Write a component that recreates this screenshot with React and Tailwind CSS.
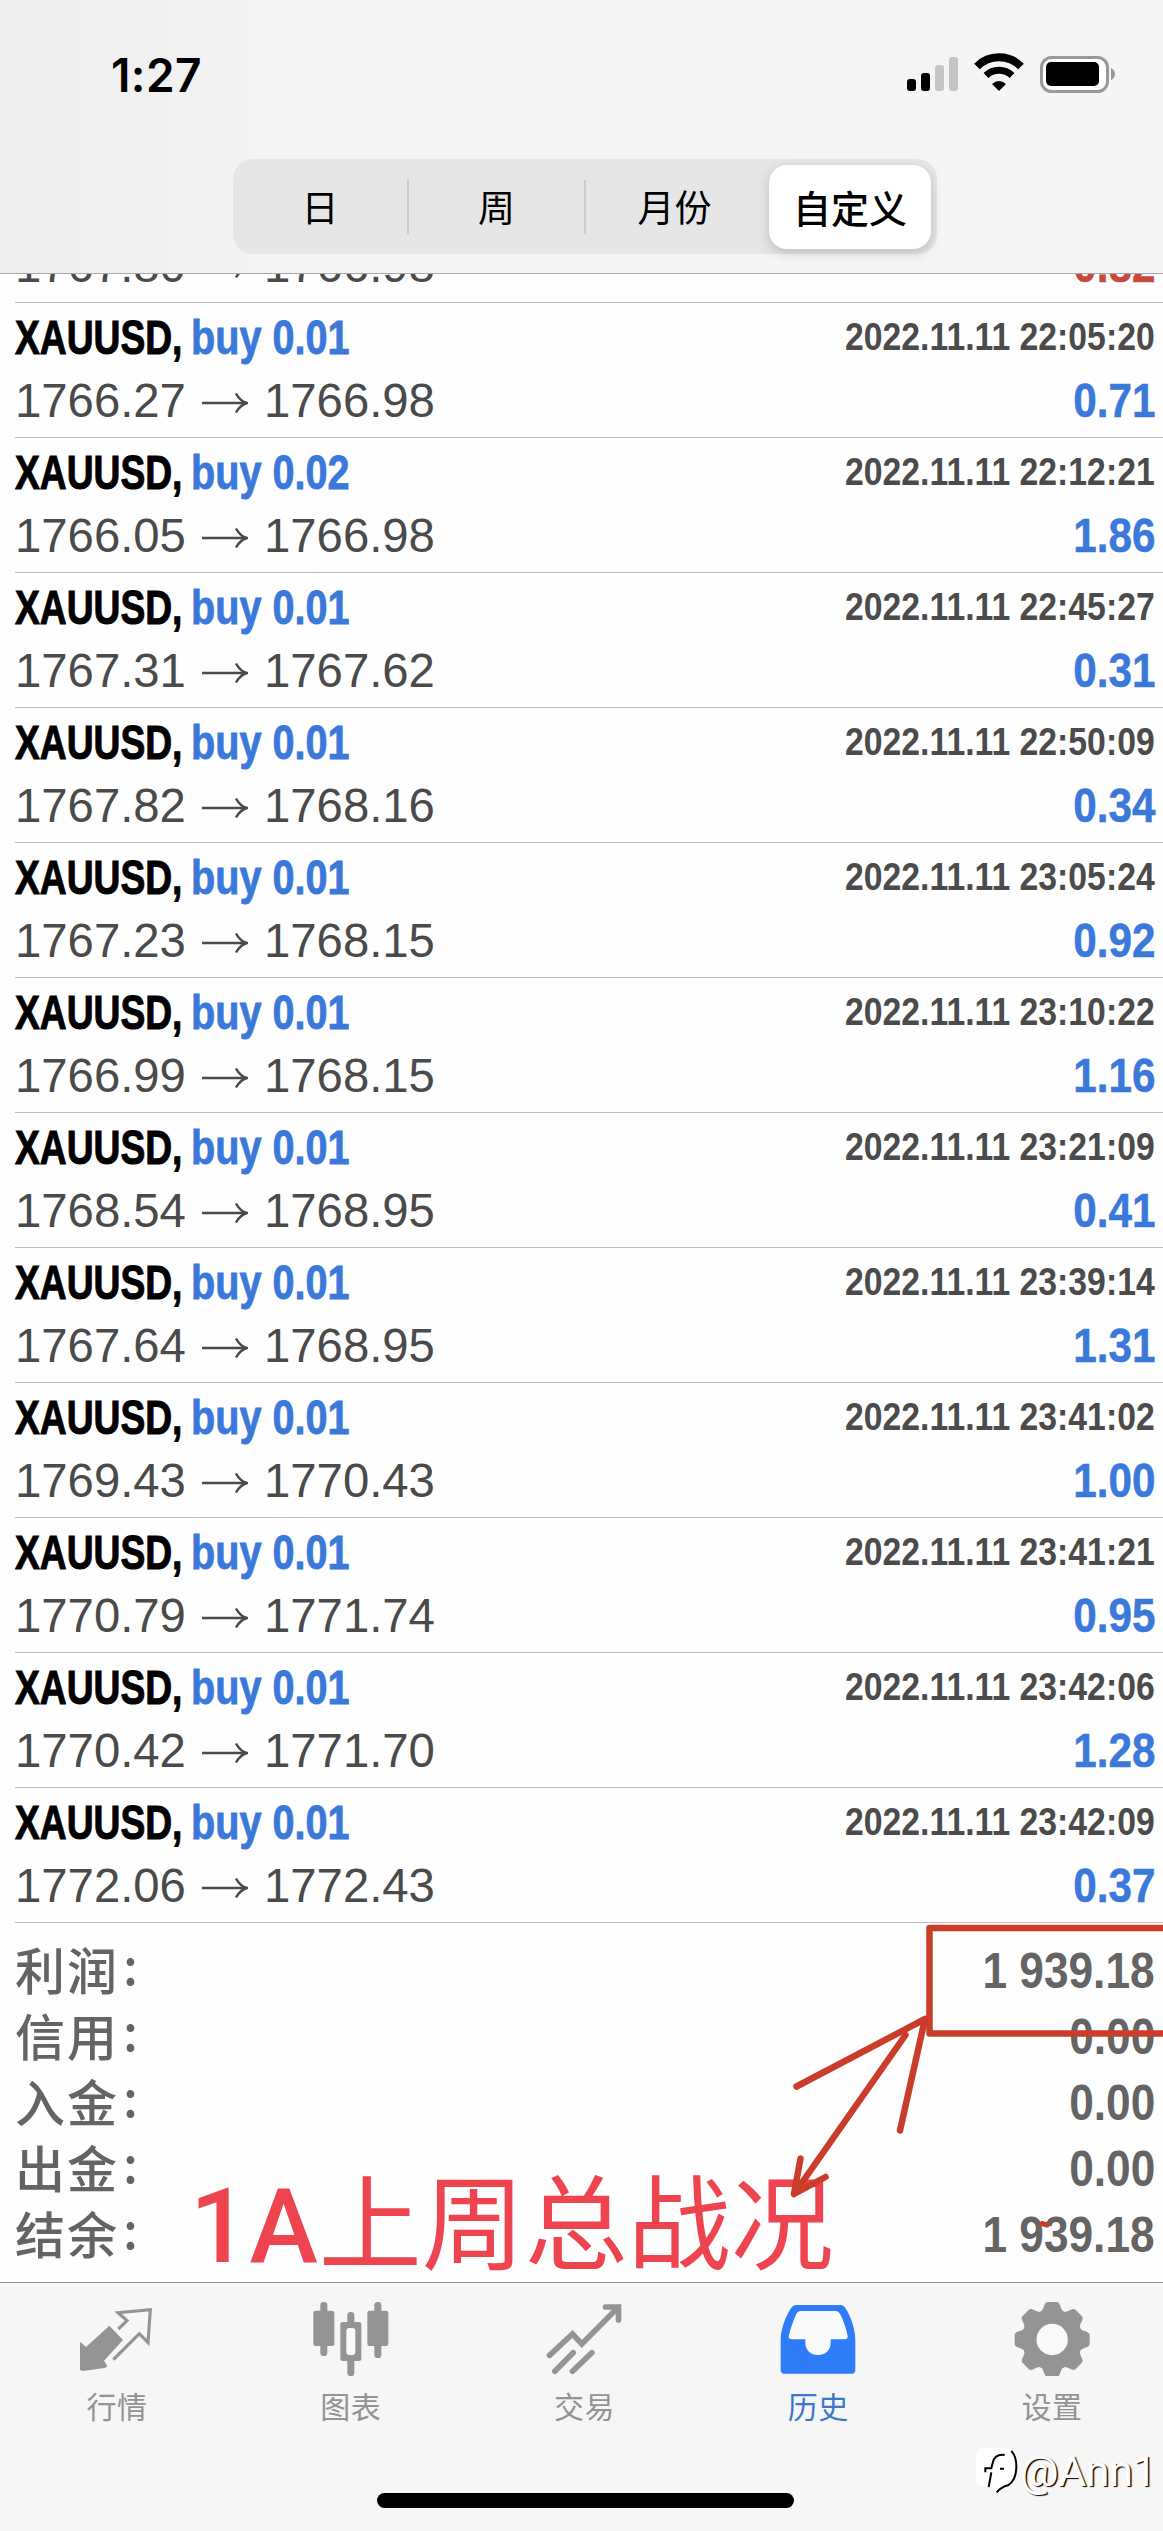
import React from "react";

const deals = [
  { lot: "0.01", open: "1767.80", close: "1766.98", time: "2022.11.11 22:03:41", profit: "-0.82" },
  { lot: "0.01", open: "1766.27", close: "1766.98", time: "2022.11.11 22:05:20", profit: "0.71" },
  { lot: "0.02", open: "1766.05", close: "1766.98", time: "2022.11.11 22:12:21", profit: "1.86" },
  { lot: "0.01", open: "1767.31", close: "1767.62", time: "2022.11.11 22:45:27", profit: "0.31" },
  { lot: "0.01", open: "1767.82", close: "1768.16", time: "2022.11.11 22:50:09", profit: "0.34" },
  { lot: "0.01", open: "1767.23", close: "1768.15", time: "2022.11.11 23:05:24", profit: "0.92" },
  { lot: "0.01", open: "1766.99", close: "1768.15", time: "2022.11.11 23:10:22", profit: "1.16" },
  { lot: "0.01", open: "1768.54", close: "1768.95", time: "2022.11.11 23:21:09", profit: "0.41" },
  { lot: "0.01", open: "1767.64", close: "1768.95", time: "2022.11.11 23:39:14", profit: "1.31" },
  { lot: "0.01", open: "1769.43", close: "1770.43", time: "2022.11.11 23:41:02", profit: "1.00" },
  { lot: "0.01", open: "1770.79", close: "1771.74", time: "2022.11.11 23:41:21", profit: "0.95" },
  { lot: "0.01", open: "1770.42", close: "1771.70", time: "2022.11.11 23:42:06", profit: "1.28" },
  { lot: "0.01", open: "1772.06", close: "1772.43", time: "2022.11.11 23:42:09", profit: "0.37" },
];

const totals = [
  { label: "利润", value: "1 939.18" },
  { label: "信用", value: "0.00" },
  { label: "入金", value: "0.00" },
  { label: "出金", value: "0.00" },
  { label: "结余", value: "1 939.18" },
];

function StatusBar() {
  return (
    <div className="flex h-[159px] items-start justify-between pt-[51px] pr-[48px] pl-[111px]">
      <span className="font-['Inter',sans-serif] text-[46px] leading-[48px] font-semibold tracking-[0.4px]">
        1:27
      </span>
      <svg className="mt-[2px] h-[42px] w-[210px]" viewBox="0 0 210 42" fill="none">
        {/* Signal */}
        <rect x="2" y="26" width="9" height="12" rx="3" fill="#000" />
        <rect x="16" y="20" width="9" height="18" rx="3" fill="#000" />
        <rect x="30" y="12" width="9" height="26" rx="3" fill="#c5c5c5" />
        <rect x="44" y="4" width="9" height="34" rx="3" fill="#c5c5c5" />
        {/* Wifi */}
        <path d="M72 13.500A31 31 0 0 1 116 13.500" stroke="#000" strokeWidth="8" />
        <path d="M81 22.500A19 19 0 0 1 107 22.500" stroke="#000" strokeWidth="7" />
        <path d="M94 38L87 31Q94 25 101 31Z" fill="#000" />
        {/* Battery */}
        <rect x="136.500" y="4.500" width="66" height="34" rx="10" stroke="#999" strokeWidth="3" fill="#fff" />
        <rect x="141" y="9" width="53" height="24" rx="5" fill="#000" />
        <path d="M206 15Q210 17 210 21Q210 25 206 27Z" fill="#999" />
      </svg>
    </div>
  );
}

function PeriodTabs() {
  return (
    <div className="ml-[233px] flex h-[95px] w-[704px] items-center rounded-[20px] bg-[#e6e6e7] pr-[6px] text-[37px]">
      <div className="w-[174px] text-center">日</div>
      <div className="h-[54px] w-[2px] bg-[#cdcdcf]" />
      <div className="w-[175px] text-center">周</div>
      <div className="h-[54px] w-[2px] bg-[#cdcdcf]" />
      <div className="w-[177px] text-center">月份</div>
      <div className="ml-[6px] flex h-[84px] w-[162px] items-center justify-center rounded-[18px] bg-white text-[38px] font-medium shadow-[0_4px_12px_rgba(0,0,0,0.18)]">
        自定义
      </div>
    </div>
  );
}

function DealRow({ deal }) {
  const loss = deal.profit.startsWith("-");

  return (
    <div className="ml-[15px] h-[135px] border-b border-[#bdbdbf] pt-[11px] pr-[8px] font-['Liberation_Sans',sans-serif] text-[48px] leading-[48px]">
      <div className="flex font-bold whitespace-nowrap">
        <span className="w-[176px] origin-left scale-x-[.775] text-black [-webkit-text-stroke:1px]">XAUUSD,</span>
        <span className="w-[200px] origin-left scale-x-[.825] text-[#3a78da] [-webkit-text-stroke:0.8px]">
          buy {deal.lot}
        </span>
        <span className="mt-[4px] ml-auto origin-right scale-x-[.888] text-[38px] leading-[38px] text-[#4b4b4c]">
          {deal.time}
        </span>
      </div>
      <div className="mt-[15px] flex items-center whitespace-nowrap text-[#4a4a4b]">
        <span className="w-[187px] origin-left scale-x-[.985]">{deal.open}</span>
        <svg className="mt-[4px] h-[22px] w-[46px]" viewBox="0 0 46 22" fill="none" stroke="#4a4a4b" strokeWidth="2.500">
          <path d="M0 11H44M34 1.500Q38 9 45 11Q38 13 34 20.500" />
        </svg>
        <span className="ml-[16px] origin-left scale-x-[.985]">{deal.close}</span>
        <span
          className={`ml-auto origin-right scale-x-[.88] font-bold [-webkit-text-stroke:0.5px] ${loss ? "text-[#c8493c]" : "text-[#3a78da]"}`}
        >
          {deal.profit}
        </span>
      </div>
    </div>
  );
}

function Totals() {
  return (
    <div className="pt-[15px] pr-[8px] pl-[15px] text-[50px] leading-[66px] text-[#646465]">
      {totals.map((item) => (
        <div key={item.label} className="flex h-[66px] justify-between">
          <span className="-mt-[3px] flex font-medium tracking-[2px]">
            {item.label}
            <span className="-mt-[5px] ml-[4px]">:</span>
          </span>
          <span className="origin-right scale-x-[.885] font-['Liberation_Sans',sans-serif] font-bold whitespace-nowrap">
            {item.value}
          </span>
        </div>
      ))}
    </div>
  );
}

// Handwritten marks that lie over the totals
function Annotation() {
  return (
    <>
      <div className="absolute top-[2167px] left-[190px] font-['Roboto','Noto_Sans_CJK_SC',sans-serif] text-[103px] leading-[120px] whitespace-nowrap text-[#ee4450]">
        <span className="font-medium tracking-[1px]">1A</span>上周总战况
      </div>
      <svg
        className="absolute top-[1900px] left-[763px] h-[360px] w-[400px]"
        viewBox="763 1900 400 360"
        fill="none"
        stroke="#cb3d2b"
        strokeWidth="6.500"
        strokeLinecap="round"
        strokeLinejoin="round"
      >
        <path d="M1170 1928H929.500V2033.500H1170" />
        <path d="M796.500 2086.500L925 2019L900 2130.500" />
        <path d="M905.500 2035L794 2194L800.500 2158.500M794 2194L825.500 2177" />
        <path d="M1042 2223.500L1047 2225" strokeWidth="5" />
      </svg>
    </>
  );
}

function QuotesIcon() {
  return (
    <svg className="size-[76px]" viewBox="27 30 228 228" fill="none">
      <path d="M30 155L48 171L118 107L159 150L102 212L112 229L104 234L38 243L30 240Z" fill="#949494" />
      <path d="M145 117L171 92L144 68L241 59L234 158L208 131L130 209" stroke="#949494" strokeWidth="9.500" />
    </svg>
  );
}

function ChartIcon() {
  return (
    <svg className="size-[76px]" viewBox="728 30 228 228" fill="#949494">
      <rect x="729" y="62" width="63" height="106" rx="7" />
      <rect x="750" y="36" width="21" height="162" rx="10" />
      <rect x="891" y="62" width="63" height="106" rx="7" />
      <rect x="912" y="36" width="21" height="168" rx="10" />
      <rect x="831" y="66" width="21" height="50" rx="10" />
      <rect x="831" y="190" width="21" height="68" rx="10" />
      <rect x="810" y="96" width="63" height="117" rx="7" />
      <rect x="828" y="114" width="27" height="81" rx="9" fill="#f9f9f9" />
    </svg>
  );
}

function TradeIcon() {
  return (
    <svg
      className="size-[76px]"
      viewBox="49.5 30 228 228"
      fill="none"
      stroke="#949494"
      strokeWidth="17"
      strokeLinecap="round"
    >
      <path d="M60 196L129 132L157 162L264 54M228 51H267V90" />
      <path d="M76 244L131 188M129 244L187 188" />
    </svg>
  );
}

function HistoryIcon() {
  return (
    <svg className="size-[76px]" viewBox="751 30 228 228">
      <path
        d="M801 45H932Q942 45 948 55C966 84 977 122 977 150V240Q977 251 966 251H764Q753 251 753 240V150C753 120 766 82 784 55Q790 45 801 45Z"
        fill="#2f7cf8"
      />
      <path
        d="M813 63H918Q927 63 931 71C941 91 950 115 954 138Q955 148 945 148H903V158C903 181 886 195 865 195C844 195 827 181 827 158V148H786Q776 148 777 138C783 115 791 91 800 71Q804 63 813 63Z"
        fill="#f9fafc"
      />
    </svg>
  );
}

function SettingsIcon() {
  return (
    <svg className="size-[76px]" viewBox="163 30 228 228">
      <g fill="#949494">
        <circle cx="277.500" cy="148.500" r="91" />
        {[0, 45, 90, 135, 180, 225, 270, 315].map((deg) => (
          <path
            key={deg}
            transform={`rotate(${deg} 277.5 148.5)`}
            d="M240 68Q249 62 252 52Q256 36 264 36H291Q299 36 303 52Q306 62 315 68L306 90H249Z"
          />
        ))}
      </g>
      <circle cx="277.500" cy="148.500" r="47" fill="#f9f9f9" />
    </svg>
  );
}

const navItems = [
  { label: "行情", Icon: QuotesIcon },
  { label: "图表", Icon: ChartIcon },
  { label: "交易", Icon: TradeIcon },
  { label: "历史", Icon: HistoryIcon, active: true },
  { label: "设置", Icon: SettingsIcon },
];

function BottomNav() {
  return (
    <div className="relative h-[249px] border-t border-[#8e8e90] bg-[#f6f6f7] pt-[17px]">
      <div className="flex w-[1169px]">
        {navItems.map(({ label, Icon, active }) => (
          <div key={label} className="flex flex-1 flex-col items-center">
            <Icon />
            <span
              className={`mt-[11px] text-[30px] leading-[36px] tracking-[0.5px] ${active ? "text-[#3b78c9]" : "text-[#939393]"}`}
            >
              {label}
            </span>
          </div>
        ))}
      </div>

      {/* Home indicator */}
      <div className="mt-[70px] ml-[377px] h-[15px] w-[417px] rounded-full bg-black" />

      {/* Watermark */}
      <div className="absolute top-[162px] left-[974px] flex items-center">
        <svg className="h-[48px] w-[46px]" viewBox="0 0 138 144" fill="none">
          <path d="M30 3H92Q128 10 128 60Q128 105 92 122L64 138L60 120H30Q5 118 5 90V35Q5 5 30 3Z" fill="#fff" />
          <path d="M112 12Q128 28 127 62Q126 100 102 115Q82 120 68 136" stroke="#000" strokeWidth="6" />
          <path d="M92 24Q62 20 56 48L52 64H34V76M52 76L44 120M78 65H90" stroke="#000" strokeWidth="6" />
        </svg>
        <span className="font-['Roboto',sans-serif] text-[43px] leading-[52px] font-normal tracking-[-0.4px] whitespace-nowrap text-white [text-shadow:1.5px_1px_1px_#000]">
          @Ann1
        </span>
      </div>
    </div>
  );
}

export default function App() {
  return (
    <div className="relative flex h-[2531px] w-[1163px] flex-col overflow-hidden bg-[#fefefe] font-['Noto_Sans_CJK_SC',sans-serif] text-black">
      <header className="h-[274px] shrink-0 border-b border-[#a9a9ab] bg-linear-to-r from-[#ededee] via-[#f4f4f5] via-25% to-[#f5f5f7]">
        <StatusBar />
        <PeriodTabs />
      </header>

      <main className="flex-1 overflow-hidden">
        {/* List is scrolled, the first deal is cut by the header */}
        <div className="-mt-[106px]">
          {deals.map((deal) => (
            <DealRow key={deal.time} deal={deal} />
          ))}
        </div>
        <Totals />
      </main>

      <BottomNav />
      <Annotation />
    </div>
  );
}
